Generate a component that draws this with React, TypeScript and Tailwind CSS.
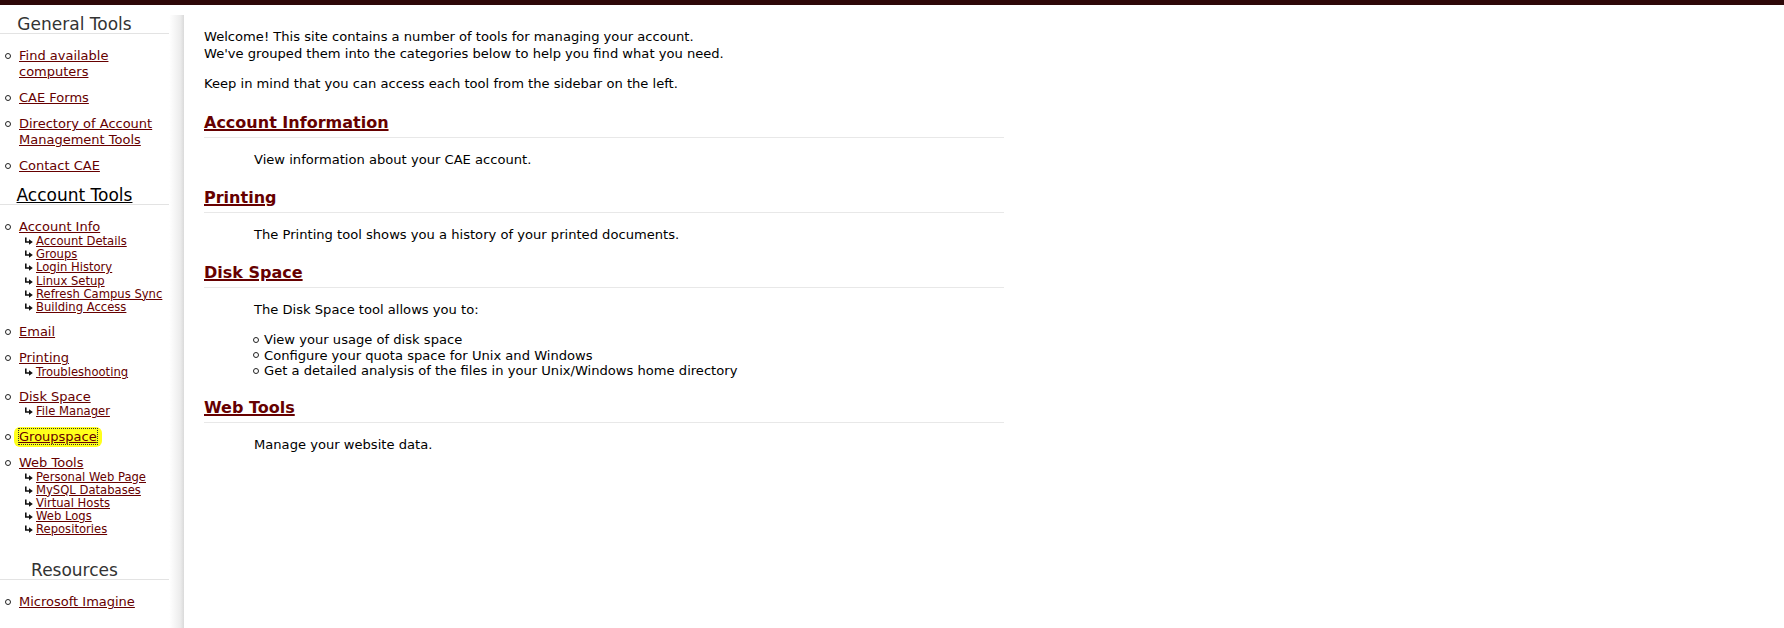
import React from 'react';

type SubLink = string;
type NavItem = { label: string; subs?: SubLink[]; highlight?: boolean };
type NavSection = { title: string; items: NavItem[]; active?: boolean; className: string };

const sections: NavSection[] = [
  {
    title: 'General Tools',
    className: '',
    items: [
      { label: 'Find available computers' },
      { label: 'CAE Forms' },
      { label: 'Directory of Account Management Tools' },
      { label: 'Contact CAE' },
    ],
  },
  {
    title: 'Account Tools',
    active: true,
    className: 'mt-[12px]',
    items: [
      {
        label: 'Account Info',
        subs: ['Account Details', 'Groups', 'Login History', 'Linux Setup', 'Refresh Campus Sync', 'Building Access'],
      },
      { label: 'Email' },
      { label: 'Printing', subs: ['Troubleshooting'] },
      { label: 'Disk Space', subs: ['File Manager'] },
      { label: 'Groupspace', highlight: true },
      {
        label: 'Web Tools',
        subs: ['Personal Web Page', 'MySQL Databases', 'Virtual Hosts', 'Web Logs', 'Repositories'],
      },
    ],
  },
  {
    title: 'Resources',
    className: 'mt-[25px]',
    items: [{ label: 'Microsoft Imagine' }],
  },
];

// little hook arrow in front of the sub links
const HookArrow = () => (
  <svg width="9" height="9" viewBox="0 0 9 9" className="shrink-0">
    <path d="M1.8 0.5 V5 H5.5" fill="none" stroke="#111" strokeWidth="1.6" />
    <polygon points="5,2.2 8.8,5 5,7.8" fill="#111" />
  </svg>
);

const Bullet = () => <span className="inline-block w-[6px] h-[6px] rounded-full border border-[#222] shrink-0" />;

const Sidebar = () => (
  <aside className="w-[184px] shrink-0 mt-[10px] bg-[linear-gradient(to_right,#ffffff_0%,#ffffff_92%,#ececec_98%,#dadada_100%)]">
    {sections.map((section) => (
      <div key={section.title} className={section.className}>
        <div className="w-[169px] border-b border-[#e3e3e3]">
          <h3
            className={
              'pr-[20px] text-center text-[17px] leading-[18px] ' +
              (section.active ? 'text-black underline' : 'text-[#333]')
            }
          >
            {section.title}
          </h3>
        </div>
        <ul className="mt-[14px] w-[169px] flex flex-col gap-[10px]">
          {section.items.map((item) => (
            <li key={item.label}>
              <div className="flex items-start text-[13px] leading-[16px]">
                <span className="w-[19px] h-[16px] pl-[5px] flex items-center shrink-0">
                  <Bullet />
                </span>
                {item.highlight ? (
                  <span className="inline-block bg-[#ffff1a] rounded-[6px] px-[5px] -mx-[5px] py-[2px] -my-[2px]">
                    <a href="#" className="text-[#660000] underline outline-1 outline-dotted outline-[#333]">
                      {item.label}
                    </a>
                  </span>
                ) : (
                  <a href="#" className="text-[#660000] underline">
                    {item.label}
                  </a>
                )}
              </div>
              {item.subs && (
                <ul>
                  {item.subs.map((sub) => (
                    <li key={sub} className="flex items-center h-[13.2px] pl-[24px]">
                      <HookArrow />
                      <a href="#" className="ml-[3px] text-[11.6px] leading-[13.2px] text-[#660000] underline">
                        {sub}
                      </a>
                    </li>
                  ))}
                </ul>
              )}
            </li>
          ))}
        </ul>
      </div>
    ))}
  </aside>
);

const SectionHeading = ({ children, className = '' }: { children: React.ReactNode; className?: string }) => (
  <h2 className={'pb-[5px] border-b border-[#e8e8e8] text-[16px] leading-[19px] font-bold ' + className}>
    <a href="#" className="text-[#660000] underline decoration-2">
      {children}
    </a>
  </h2>
);

export default function App() {
  return (
    <div className="min-h-[628px] bg-white flex flex-col text-black font-['DejaVu_Sans',Verdana,sans-serif]">
      <div className="h-[5px] bg-[#2e0708]" />
      <div className="flex flex-1 items-stretch">
        <Sidebar />
        <main className="pl-[20px] pt-[23px]">
          <div className="w-[800px] text-[13.1px] leading-[17px]">
            <p>
              Welcome! This site contains a number of tools for managing your account.
              <br />
              We've grouped them into the categories below to help you find what you need.
            </p>
            <p className="mt-[13px]">Keep in mind that you can access each tool from the sidebar on the left.</p>

            <SectionHeading className="mt-[21px]">Account Information</SectionHeading>
            <p className="mt-[13px] pl-[50px]">View information about your CAE account.</p>

            <SectionHeading className="mt-[20px]">Printing</SectionHeading>
            <p className="mt-[13px] pl-[50px]">The Printing tool shows you a history of your printed documents.</p>

            <SectionHeading className="mt-[20px]">Disk Space</SectionHeading>
            <p className="mt-[13px] pl-[50px]">The Disk Space tool allows you to:</p>
            <ul className="mt-[14px] pl-[49px] leading-[15.5px]">
              {[
                'View your usage of disk space',
                'Configure your quota space for Unix and Windows',
                'Get a detailed analysis of the files in your Unix/Windows home directory',
              ].map((line) => (
                <li key={line} className="flex items-center gap-[5px]">
                  <Bullet />
                  <span>{line}</span>
                </li>
              ))}
            </ul>

            <SectionHeading className="mt-[19px]">Web Tools</SectionHeading>
            <p className="mt-[13px] pl-[50px]">Manage your website data.</p>
          </div>
        </main>
      </div>
    </div>
  );
}
